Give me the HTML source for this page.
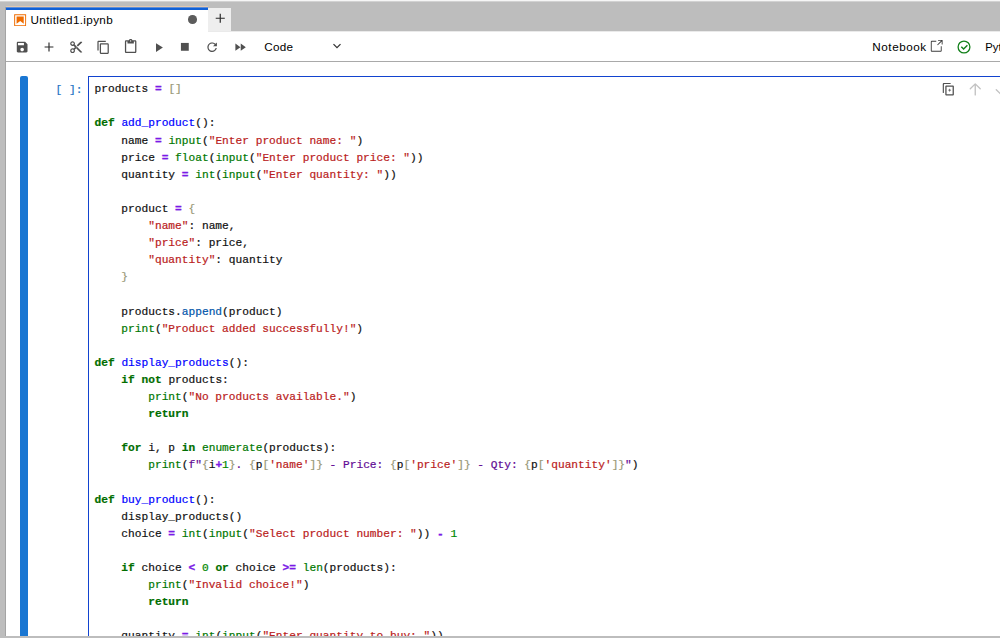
<!DOCTYPE html>
<html><head><meta charset="utf-8"><title>Untitled1.ipynb</title>
<style>
html,body{margin:0;padding:0;}
body{width:1000px;height:638px;overflow:hidden;background:#fff;position:relative;font-family:"Liberation Sans",sans-serif;font-size:13px;color:#000;}
.abs{position:absolute;}
.ic{fill:#505050;}
#topbar{left:0;top:0;width:1000px;height:31px;background:#bdbdbd;}
#topbar2{left:208px;top:31px;width:792px;height:1px;background:#eaeaea;}
#topline{left:0;top:0;width:1000px;height:1px;background:#f6f6f6;}
#topline2{left:0;top:1px;width:1000px;height:1px;background:#d2d2d2;}
#leftedge{left:5px;top:7px;width:1px;height:631px;background:#a4a4a4;}
#peach{left:6px;top:6px;width:202px;height:1px;background:#e3c9ae;}
#leftstrip{left:0;top:0;width:6px;height:638px;background:#bdbdbd;}
#botstrip{left:0;top:636px;width:1000px;height:2px;background:#bdbdbd;}
#tab{left:6px;top:7px;width:202px;height:24px;background:#fff;border-top:3px solid #1060d6;box-sizing:border-box;}
#tabtopaa{left:6px;top:7px;width:202px;height:1px;background:#5f8ed6;}
#tabplus{left:208px;top:8px;width:23px;height:23px;background:#eeeeee;}
#toolbar{left:6px;top:32px;width:994px;height:29px;background:#fff;border-bottom:1px solid #a9a9a9;}
.ui{font-size:13px;line-height:16px;white-space:pre;color:#000;}
#collapser{left:20px;top:76px;width:8px;height:562px;background:#1976d2;border-radius:2px 2px 0 0;}
#editor{left:88px;top:76px;width:930px;height:600px;border:1px solid #1243cf;box-sizing:border-box;}
pre{margin:0;}
#code,#prompt{font-family:"Liberation Mono",monospace;font-size:11.19px;line-height:17.1px;white-space:pre;-webkit-text-stroke:0.2px currentColor;}
#code{left:94.5px;top:81.3px;color:#111;}
#prompt{left:55.5px;top:82.3px;color:#2273c4;}
.k{color:#006e00;font-weight:bold;}
.b{color:#007800;}
.n{color:#008800;}
.s{color:#ba2121;}
.s2{color:#620a94;}
.o{color:#7a1ae6;font-weight:bold;-webkit-text-stroke:0.3px #7a1ae6;}
.d{color:#0000ff;}
.p{color:#0055aa;}
.br{color:#999977;}
</style></head><body>
<div id="topbar" class="abs"></div>
<div id="topbar2" class="abs"></div>
<div id="tab" class="abs"></div>
<div id="tabtopaa" class="abs"></div>
<div id="tabplus" class="abs"></div>
<div id="toolbar" class="abs"></div>
<div id="leftstrip" class="abs"></div>
<div id="leftedge" class="abs"></div>
<div id="topline" class="abs"></div>
<div id="topline2" class="abs"></div>
<div id="peach" class="abs"></div>
<div id="tabtitle" class="abs ui" style="left:30.6px;top:12.35px;font-size:11.7px;letter-spacing:0.34px;">Untitled1.ipynb</div>
<div id="celltype" class="abs ui" style="left:264.3px;top:38.55px;font-size:11.7px;letter-spacing:0.26px;">Code</div>
<div id="nbtext" class="abs ui" style="left:872.3px;top:38.75px;font-size:11.7px;letter-spacing:0.55px;">Notebook</div>
<div id="kernel" class="abs ui" style="left:985.3px;top:38.75px;font-size:11.3px;">Python 3 (ipykernel)</div>
<svg class="abs ic" style="left:14.55px;top:39.85px" width="14.3" height="14.3" viewBox="0 0 24 24"><path d="M17 3H5c-1.11 0-2 .9-2 2v14c0 1.1.89 2 2 2h14c1.1 0 2-.9 2-2V7l-4-4zm-5 16c-1.66 0-3-1.34-3-3s1.34-3 3-3 3 1.34 3 3-1.34 3-3 3zm3-10H5V5h10v4z"/></svg>
<svg class="abs ic" style="left:68.85px;top:39.75px" width="14.3" height="14.3" viewBox="0 0 24 24"><path d="M9.64 7.64c.23-.5.36-1.05.36-1.64 0-2.21-1.79-4-4-4S2 3.79 2 6s1.79 4 4 4c.59 0 1.14-.13 1.64-.36L10 12l-2.36 2.36C7.14 14.13 6.59 14 6 14c-2.21 0-4 1.79-4 4s1.79 4 4 4 4-1.79 4-4c0-.59-.13-1.14-.36-1.64L12 14l7 7h3v-1L9.640 7.640zM6 8c-1.100 0-2-.890-2-2s.9-2 2-2 2 .890 2 2-.9 2-2 2zm0 12c-1.100 0-2-.890-2-2s.9-2 2-2 2 .890 2 2-.9 2-2 2zm6-7.500c-.280 0-.5-.220-.5-.5s.220-.5.5-.5.5.220.5.5-.220.5-.5.500zM19 3l-6 6 2 2 7-7V3z"/></svg>
<svg class="abs ic" style="left:95.60px;top:39.70px" width="14.8" height="14.8" viewBox="0 0 18 18"><path d="M11.9,1H3.200C2.400,1,1.700,1.700,1.700,2.500v10.200h1.500V2.500h8.700V1z M14.100,3.900h-8c-0.800,0-1.500,0.700-1.500,1.500v10.200c0,0.800,0.700,1.500,1.500,1.500h8 c0.800,0,1.500-0.700,1.500-1.500V5.400C15.500,4.600,14.900,3.900,14.100,3.900z M14.100,15.500h-8V5.400h8V15.500z"/></svg>
<svg class="abs ic" style="left:123.35px;top:39.35px" width="15.3" height="15.3" viewBox="0 0 24 24"><path d="M19 2h-4.180C14.400.840 13.300 0 12 0c-1.300 0-2.400.840-2.820 2H5c-1.100 0-2 .9-2 2v16c0 1.100.9 2 2 2h14c1.100 0 2-.9 2-2V4c0-1.100-.9-2-2-2zm-7 0c.550 0 1 .450 1 1s-.450 1-1 1-1-.450-1-1 .450-1 1-1zm7 18H5V4h2v3h10V4h2v16z"/></svg>
<svg class="abs ic" style="left:150.70px;top:39.50px" width="15.0" height="15.0" viewBox="0 0 24 24"><path d="M8 5v14l11-7z"/></svg>
<svg class="abs ic" style="left:177.15px;top:39.15px" width="15.7" height="15.7" viewBox="0 0 24 24"><path d="M6 6h12v12H6z"/></svg>
<svg class="abs ic" style="left:204.85px;top:40.10px" width="14.3" height="14.3" viewBox="0 0 18 18"><path d="M9 13.500c-2.490 0-4.500-2.010-4.500-4.500S6.510 4.500 9 4.500c1.240 0 2.360.520 3.170 1.330L10 8h5V3l-1.760 1.760C12.150 3.680 10.660 3 9 3 5.690 3 3.010 5.690 3.010 9S5.690 15 9 15c2.970 0 5.430-2.160 5.900-5h-1.520c-.460 2-2.240 3.500-4.380 3.500z"/></svg>
<svg class="abs ic" style="left:232.75px;top:39.85px" width="14.3" height="14.3" viewBox="0 0 24 24"><path d="M4 18l8.500-6L4 6v12zm9-12v12l8.500-6L13 6z"/></svg>
<svg class="abs" style="left:40.70px;top:38.60px" width="16" height="16" viewBox="0 0 16 16"><path d="M3.600 8h8.800M8 3.600v8.800" fill="none" stroke="#2a2a2a" stroke-width="1.15"/></svg>
<svg class="abs" style="left:331.05px;top:40.30px" width="12" height="12" viewBox="0 0 12 12"><path d="M2.500 4.100L6 7.700L9.500 4.100" fill="none" stroke="#333" stroke-width="1.25"/></svg>
<svg class="abs" style="left:13.10px;top:13.05px" width="14.3" height="14.3" viewBox="0 0 22 22" fill="#ef6c00"><path d="M18.7 3.300v15.400H3.300V3.300h15.400m1.500-1.500H1.800v18.300h18.300l.1-18.300z"/><path d="M16.500 16.500l-5.400-4.300-5.600 4.300v-11h11z"/></svg>
<div class="abs" style="left:188.1px;top:15.1px;width:8.6px;height:8.6px;border-radius:50%;background:#5c5c5c"></div>
<svg class="abs" style="left:211.75px;top:10.05px" width="16.5" height="16.5" viewBox="0 0 16 16"><path d="M3.600 8h8.800M8 3.600v8.800" fill="none" stroke="#2a2a2a" stroke-width="1.15"/></svg>
<svg class="abs" fill="#3c3c3c" style="left:928.7px;top:39.2px" width="14.5" height="14.5" viewBox="0 0 32 32"><path d="M26,28H6a2.003,2.003,0,0,1-2-2V6A2.003,2.003,0,0,1,6,4H16V6H6V26H26V16h2V26A2.003,2.003,0,0,1,26,28Z"/><polygon points="20 2 20 4 26.586 4 18 12.586 19.414 14 28 5.414 28 12 30 12 30 2 20 2"/></svg>
<svg class="abs" style="left:956.4px;top:38.7px" width="16" height="16" viewBox="0 0 16 16" fill="none" stroke="#12801a" stroke-width="1.3"><circle cx="8" cy="8" r="5.9"/><path d="M5.300 7.800L7.600 10.100L11.400 6.200" stroke-width="1.4"/></svg>
<svg class="abs ic" style="left:941px;top:82.2px" width="14.5" height="14.5" viewBox="0 0 14 14"><path fill-rule="evenodd" clip-rule="evenodd" d="M2.800 0.875H8.896C9.201 0.875 9.450 1.124 9.450 1.429C9.450 1.734 9.201 1.983 8.896 1.983H3.354C3.049 1.983 2.800 2.232 2.800 2.537V10.021C2.800 10.326 2.551 10.575 2.246 10.575C1.941 10.575 1.692 10.326 1.692 10.021V1.983C1.692 1.374 2.190 0.875 2.800 0.875ZM5.367 11.900V4.550H11.200V11.900H5.367ZM4.142 4.142C4.142 3.600 4.525 3.325 4.958 3.325H11.608C12.042 3.325 12.425 3.708 12.425 4.142V12.308C12.425 12.742 12.042 13.125 11.608 13.125H4.958C4.525 13.125 4.142 12.742 4.142 12.308V4.142Z"/><path d="M9.435 8.265H8.738V8.962C8.738 9.153 8.580 9.310 8.389 9.310C8.197 9.310 8.040 9.153 8.040 8.962V8.265H7.343C7.151 8.265 6.995 8.108 6.995 7.917C6.995 7.725 7.151 7.568 7.343 7.568H8.040V6.871C8.040 6.679 8.197 6.523 8.389 6.523C8.580 6.523 8.738 6.679 8.738 6.871V7.568H9.435C9.626 7.568 9.783 7.725 9.783 7.917C9.783 8.108 9.626 8.265 9.435 8.265Z"/></svg>
<svg class="abs" style="left:968.2px;top:82.2px" width="14.5" height="14.5" viewBox="0 0 14 14" fill="none" stroke="#c2c2c2" stroke-width="1.3" stroke-linecap="round" stroke-linejoin="round"><path d="M7 12.500V1.800M2.200 6.600L7 1.800l4.800 4.800"/></svg>
<svg class="abs" style="left:994.3px;top:82.2px" width="14.5" height="14.5" viewBox="0 0 14 14" fill="none" stroke="#c2c2c2" stroke-width="1.3" stroke-linecap="round" stroke-linejoin="round"><path d="M7 1.500v10.700M2.200 7.400L7 12.200l4.800-4.800"/></svg>
<div id="collapser" class="abs"></div>
<div id="editor" class="abs"></div>
<pre id="prompt" class="abs">[ ]:</pre>
<pre id="code" class="abs">products <span class="o">=</span> <span class="br">[]</span>

<span class="k">def</span> <span class="d">add_product</span>():
    name <span class="o">=</span> <span class="b">input</span>(<span class="s">"Enter product name: "</span>)
    price <span class="o">=</span> <span class="b">float</span>(<span class="b">input</span>(<span class="s">"Enter product price: "</span>))
    quantity <span class="o">=</span> <span class="b">int</span>(<span class="b">input</span>(<span class="s">"Enter quantity: "</span>))

    product <span class="o">=</span> <span class="br">{</span>
        <span class="s">"name"</span>: name,
        <span class="s">"price"</span>: price,
        <span class="s">"quantity"</span>: quantity
    <span class="br">}</span>

    products.<span class="p">append</span>(product)
    <span class="b">print</span>(<span class="s">"Product added successfully!"</span>)

<span class="k">def</span> <span class="d">display_products</span>():
    <span class="k">if</span> <span class="k">not</span> products:
        <span class="b">print</span>(<span class="s">"No products available."</span>)
        <span class="k">return</span>

    <span class="k">for</span> i, p <span class="k">in</span> <span class="b">enumerate</span>(products):
        <span class="b">print</span>(<span class="s2">f"</span><span class="br">{</span>i<span class="o">+</span><span class="n">1</span><span class="br">}</span><span class="s2">. </span><span class="br">{</span>p<span class="br">[</span><span class="s">'name'</span><span class="br">]}</span><span class="s2"> - Price: </span><span class="br">{</span>p<span class="br">[</span><span class="s">'price'</span><span class="br">]}</span><span class="s2"> - Qty: </span><span class="br">{</span>p<span class="br">[</span><span class="s">'quantity'</span><span class="br">]}</span><span class="s2">"</span>)

<span class="k">def</span> <span class="d">buy_product</span>():
    display_products()
    choice <span class="o">=</span> <span class="b">int</span>(<span class="b">input</span>(<span class="s">"Select product number: "</span>)) <span class="o">-</span> <span class="n">1</span>

    <span class="k">if</span> choice <span class="o">&lt;</span> <span class="n">0</span> <span class="k">or</span> choice <span class="o">&gt;=</span> <span class="b">len</span>(products):
        <span class="b">print</span>(<span class="s">"Invalid choice!"</span>)
        <span class="k">return</span>

    quantity <span class="o">=</span> <span class="b">int</span>(<span class="b">input</span>(<span class="s">"Enter quantity to buy: "</span>))</pre>
<div id="botstrip" class="abs"></div>
</body></html>
